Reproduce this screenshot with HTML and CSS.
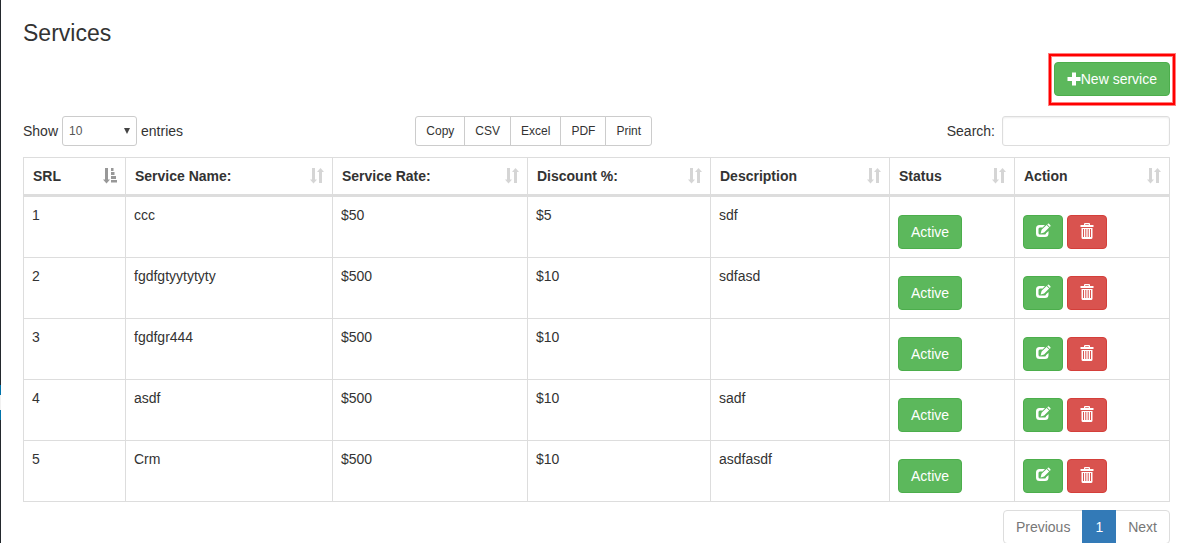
FILE: index.html
```html
<!DOCTYPE html>
<html lang="en">
<head>
<meta charset="utf-8">
<meta name="viewport" content="width=device-width, initial-scale=1">
<title>Services</title>
<link rel="stylesheet" href="styles.css">
</head>
<body>
<svg class="sprite" aria-hidden="true">
  <symbol id="sort" viewBox="0 0 14 16"><path d="M2 0h3v11.500h2L3.500 15.500 0 11.500h2zM9 15h3V4h2l-3.500-4L7 4h2z"/></symbol>
  <symbol id="sort-asc" viewBox="0 0 14 16"><path d="M2 0h3v11.500h2L3.500 15.500 0 11.500h2zM8 0h2.500v3H8zM8 4h3.500v3H8zM8 8h5v3H8zM8 12h6v2.500H8z"/></symbol>
  <symbol id="plus" viewBox="0 0 14 14"><path d="M5 .5h4V5h4.500v4H9v4.500H5V9H.5V5H5z"/></symbol>
  <symbol id="edit" viewBox="0 0 16 16"><path d="M10 2H4.500Q1 2 1 5.500v5Q1 14 4.500 14h5.500q3.500 0 3.500-3.500V8L11 10.300q0 1.200-1.300 1.200H5Q3.500 11.500 3.500 10V6Q3.500 4.500 5 4.500h2.600z"/><path d="M5.600 10.500l1-3.700L11.600 2l2.500 2.400-5 5zM12.300 1.400l.6-.6q.5-.4 1 0l1.500 1.500q.4.500 0 1l-.6.600z"/></symbol>
  <symbol id="trash" viewBox="0 0 14 16"><path d="M4 2V1q0-1 1-1h4q1 0 1 1v1h3.500v2H.5V2zM5.200 2h3.600V1.200H5.200z" fill-rule="evenodd"/><path d="M1.500 5h11v9.500q0 1.500-1.500 1.500H3q-1.500 0-1.500-1.500zM3 6v8h1V6zM5.300 6v8h1V6zM7.700 6v8h1V6zM10 6v8h1V6z" fill-rule="evenodd"/></symbol>
</svg>
<div class="app">
  <div class="menu-edge"><span class="menu-current"></span></div>
  <main class="content">
    <h1 class="title">Services</h1>
    <div class="actions">
      <div class="highlight">
        <button type="button" class="btn btn-success btn-new"><svg class="icon-plus" aria-hidden="true"><use href="#plus"/></svg>New service</button>
      </div>
    </div>
    <div class="toolbar">
      <label class="length">Show
        <span class="select-wrap"><select class="control select"><option>10</option><option>25</option><option>50</option><option>100</option></select></span>
        entries</label>
      <div class="exports">
        <button type="button" class="export">Copy</button>
        <button type="button" class="export">CSV</button>
        <button type="button" class="export">Excel</button>
        <button type="button" class="export">PDF</button>
        <button type="button" class="export">Print</button>
      </div>
      <label class="search">Search: <input type="search" class="control search-input"></label>
    </div>
    <table class="table">
      <colgroup><col class="c-srl"><col class="c-name"><col class="c-rate"><col class="c-discount"><col class="c-desc"><col class="c-status"><col class="c-action"></colgroup>
      <thead>
        <tr>
          <th><div class="head">SRL<svg class="sort sorted"><use href="#sort-asc"/></svg></div></th>
          <th><div class="head">Service Name:<svg class="sort"><use href="#sort"/></svg></div></th>
          <th><div class="head">Service Rate:<svg class="sort"><use href="#sort"/></svg></div></th>
          <th><div class="head">Discount %:<svg class="sort"><use href="#sort"/></svg></div></th>
          <th><div class="head">Description<svg class="sort"><use href="#sort"/></svg></div></th>
          <th><div class="head">Status<svg class="sort"><use href="#sort"/></svg></div></th>
          <th><div class="head">Action<svg class="sort"><use href="#sort"/></svg></div></th>
        </tr>
      </thead>
      <tbody>
        <tr><td>1</td><td>ccc</td><td>$50</td><td>$5</td><td>sdf</td>
          <td><div class="cell-buttons"><button type="button" class="btn btn-success">Active</button></div></td>
          <td><div class="cell-buttons"><button type="button" class="btn btn-success btn-icon" aria-label="Edit"><svg class="icon-edit"><use href="#edit"/></svg></button><button type="button" class="btn btn-danger btn-icon" aria-label="Delete"><svg class="icon-trash"><use href="#trash"/></svg></button></div></td></tr>
        <tr><td>2</td><td>fgdfgtyytytyty</td><td>$500</td><td>$10</td><td>sdfasd</td>
          <td><div class="cell-buttons"><button type="button" class="btn btn-success">Active</button></div></td>
          <td><div class="cell-buttons"><button type="button" class="btn btn-success btn-icon" aria-label="Edit"><svg class="icon-edit"><use href="#edit"/></svg></button><button type="button" class="btn btn-danger btn-icon" aria-label="Delete"><svg class="icon-trash"><use href="#trash"/></svg></button></div></td></tr>
        <tr><td>3</td><td>fgdfgr444</td><td>$500</td><td>$10</td><td></td>
          <td><div class="cell-buttons"><button type="button" class="btn btn-success">Active</button></div></td>
          <td><div class="cell-buttons"><button type="button" class="btn btn-success btn-icon" aria-label="Edit"><svg class="icon-edit"><use href="#edit"/></svg></button><button type="button" class="btn btn-danger btn-icon" aria-label="Delete"><svg class="icon-trash"><use href="#trash"/></svg></button></div></td></tr>
        <tr><td>4</td><td>asdf</td><td>$500</td><td>$10</td><td>sadf</td>
          <td><div class="cell-buttons"><button type="button" class="btn btn-success">Active</button></div></td>
          <td><div class="cell-buttons"><button type="button" class="btn btn-success btn-icon" aria-label="Edit"><svg class="icon-edit"><use href="#edit"/></svg></button><button type="button" class="btn btn-danger btn-icon" aria-label="Delete"><svg class="icon-trash"><use href="#trash"/></svg></button></div></td></tr>
        <tr><td>5</td><td>Crm</td><td>$500</td><td>$10</td><td>asdfasdf</td>
          <td><div class="cell-buttons"><button type="button" class="btn btn-success">Active</button></div></td>
          <td><div class="cell-buttons"><button type="button" class="btn btn-success btn-icon" aria-label="Edit"><svg class="icon-edit"><use href="#edit"/></svg></button><button type="button" class="btn btn-danger btn-icon" aria-label="Delete"><svg class="icon-trash"><use href="#trash"/></svg></button></div></td></tr>
      </tbody>
    </table>
    <nav class="pagination" aria-label="Table pages">
      <a class="page" href="#">Previous</a>
      <a class="page active" href="#">1</a>
      <a class="page" href="#">Next</a>
    </nav>
  </main>
</div>
</body>
</html>
```

FILE: styles.css
```css
* { box-sizing: border-box; }

body {
  margin: 0;
  background: #fff;
  color: #333;
  font: 14px/20px "Liberation Sans", Arial, sans-serif;
}

button, input, select { font-family: inherit; margin: 0; }

.sprite { display: none; }

.app {
  display: flex;
  height: 100vh;
  overflow: hidden;
}

/* Visible edge of the collapsed admin menu */
.menu-edge {
  flex: none;
  width: 1px;
  background: #23282d;
  padding-top: 385px;
}
.menu-current {
  display: block;
  height: 35px;
  background: #f1f1f1;
  border: solid #0073aa;
  border-width: 10px 0;
}

.content {
  flex: 1;
  min-width: 0;
  padding: 20px 7px 0 22px;
}

.title {
  margin: 0;
  font-size: 23px;
  font-weight: 400;
  line-height: 26px;
}

.actions {
  display: flex;
  justify-content: flex-end;
  margin: 16px 0 20px;
}

.highlight { position: relative; }
.highlight::after {
  content: "";
  position: absolute;
  inset: -8px -5px -9px;
  border: 2px solid #f00;
  box-shadow: 0 0 0 1px #ff8080, inset 0 0 0 1px #ff8080;
  pointer-events: none;
}

.btn {
  display: inline-flex;
  align-items: center;
  justify-content: center;
  height: 34px;
  padding: 0 12px;
  border: 1px solid;
  border-radius: 4px;
  color: #fff;
  font-size: 14px;
  line-height: 20px;
}
.btn-success { background: #5cb85c; border-color: #4cae4c; }
.btn-danger { background: #d9534f; border-color: #d43f3a; }
.btn-icon { width: 40px; padding: 0 0 2px; }

.icon-plus { width: 14px; height: 14px; fill: currentColor; }
.icon-edit { width: 16px; height: 16px; fill: currentColor; }
.icon-trash { width: 14px; height: 16px; fill: currentColor; }

.toolbar {
  display: grid;
  grid-template-columns: repeat(3, 1fr);
  gap: 30px;
  align-items: center;
  margin-bottom: 11px;
}

.length, .search {
  display: flex;
  align-items: center;
  gap: 4px;
}
.search { justify-content: flex-end; gap: 7px; }

.control {
  height: 30px;
  padding: 5px 10px;
  border: 1px solid #ccc;
  border-radius: 3px;
  background: #fff;
  color: #555;
  font-size: 12px;
}
.search-input {
  width: 168px;
  border-color: #ddd;
  appearance: none;
  box-shadow: inset 0 1px 2px rgba(0, 0, 0, 0.07);
}

.select-wrap { position: relative; }
.select {
  display: block;
  width: 75px;
  padding: 0 6px;
  appearance: none;
}
.select-wrap::after {
  content: "";
  position: absolute;
  right: 7px;
  top: 12px;
  border: solid transparent;
  border-width: 6px 3px 0;
  border-top-color: #444;
  pointer-events: none;
}

.exports { display: flex; }
.export {
  height: 30px;
  padding: 0 10px;
  border: 1px solid #ccc;
  background: #fff;
  color: #333;
  font-size: 12px;
}
.export + .export { margin-left: -1px; }
.export:first-child { border-radius: 3px 0 0 3px; }
.export:last-child { border-radius: 0 3px 3px 0; }

.table {
  width: 100%;
  table-layout: fixed;
  border-collapse: collapse;
}
.c-srl { width: 102px; }
.c-name { width: 207px; }
.c-rate { width: 195px; }
.c-discount { width: 183px; }
.c-desc { width: 179px; }
.c-status { width: 125px; }
.c-action { width: 155px; }

.table th, .table td {
  border: 1px solid #ddd;
  padding: 8px;
  text-align: left;
  vertical-align: top;
}
.table th { border-bottom-width: 3px; padding-left: 9px; }

.head {
  display: flex;
  align-items: center;
  justify-content: space-between;
}
.sort {
  width: 14px;
  height: 16px;
  fill: #333;
  opacity: 0.2;
}
.sorted { opacity: 0.5; }

.cell-buttons {
  display: flex;
  gap: 4px;
  padding-top: 10px;
}

.pagination {
  display: flex;
  justify-content: flex-end;
  margin-top: 8px;
}
.page {
  padding: 6px 12px;
  border: 1px solid #ddd;
  color: #777;
  text-decoration: none;
}
.page + .page { margin-left: -1px; }
.page:first-child { border-radius: 4px 0 0 4px; }
.page:last-child { border-radius: 0 4px 4px 0; }
.page.active {
  z-index: 1;
  background: #337ab7;
  border-color: #337ab7;
  color: #fff;
}
```
